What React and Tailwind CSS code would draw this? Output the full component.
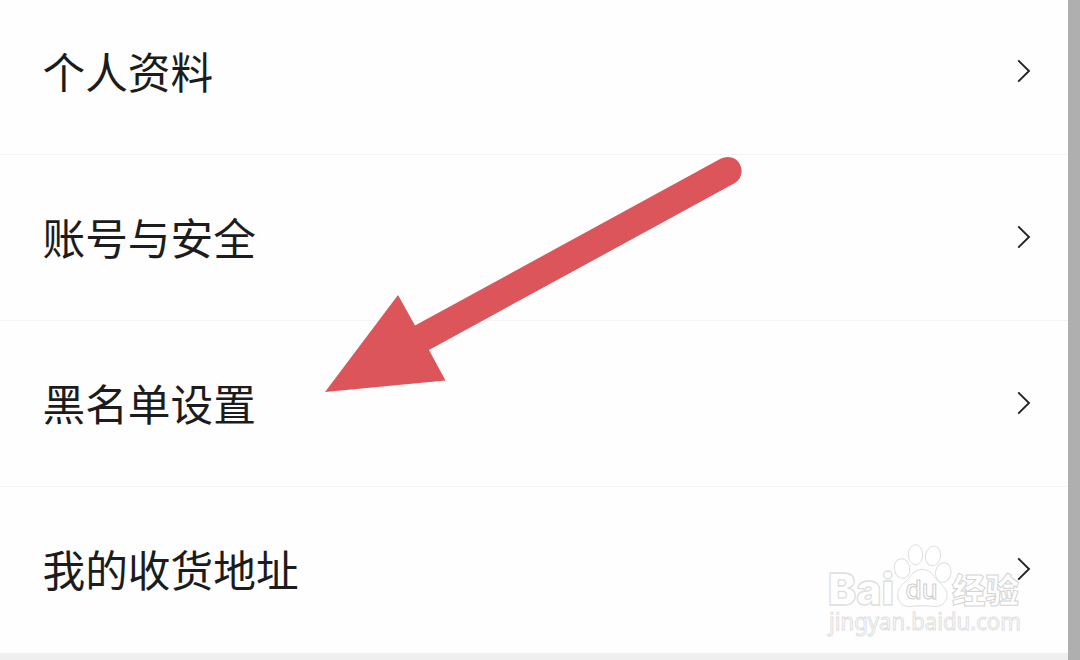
import React from "react";

const menuItems = [
  { id: "profile", label: "个人资料" },
  { id: "security", label: "账号与安全" },
  { id: "blacklist", label: "黑名单设置" },
  { id: "address", label: "我的收货地址" },
];

const Chevron = () => (
  <svg
    className="w-4 h-6 text-[#222222]"
    fill="none"
    stroke="currentColor"
    viewBox="0 0 16 24">
    <path strokeWidth={1.9} d="M2.200 1.300L13 12L2.200 22.700" />
  </svg>
);

const MenuRow = ({ label, last }) => (
  <div
    className={`flex h-[166px] items-center justify-between border-b pb-px pl-[42.5px] pr-9 ${
      last ? "border-transparent" : "border-[#f4f4f4]"
    }`}>
    <span className="pb-[2px] text-[42.7px] leading-[60px] text-[#1c1c1c]">
      {label}
    </span>
    <Chevron />
  </div>
);

const Arrow = () => (
  <svg
    className="absolute left-0 top-0 h-[660px] w-[1080px]"
    viewBox="0 0 1080 660">
    <path
      fill="#db555b"
      d="M325 392L398 295L415 325.500L721 158.500A14 14 0 0 1 734 183.500L429 350L445.500 380.500Z"
    />
  </svg>
);

const Watermark = () => (
  <svg
    className="absolute left-[810px] top-[530px] h-[120px] w-[230px]"
    viewBox="0 0 230 120"
    fill="#ffffff"
    stroke="#dedede"
    strokeWidth={1}
    strokeLinejoin="round">
    <text
      x="18"
      y="75"
      fontFamily="Inter, sans-serif"
      fontSize="44"
      fontWeight="900"
      strokeWidth={1.3}
      textLength="66"
      lengthAdjust="spacingAndGlyphs">
      Bai
    </text>
    {/* paw */}
    <ellipse cx="92" cy="38.500" rx="7.700" ry="9.800" transform="rotate(-10 92 38.500)" />
    <ellipse cx="105.500" cy="24.700" rx="7.200" ry="10" />
    <ellipse cx="123" cy="26" rx="7.500" ry="9.800" transform="rotate(10 123 26)" />
    <ellipse cx="133.300" cy="42.500" rx="7.700" ry="9.800" transform="rotate(10 133.300 42.500)" />
    <path d="M112 39.500C103 39.500 101 47 96 51C90 56 87 61 88 67C89 74 94 77 100 76.500C108 75.500 116 75.500 124 76.500C131 77 136 73 137 66C137.500 60 133 56 128 51C123 46 121 39.500 112 39.500Z" />
    <text
      x="95.500"
      y="69"
      fontFamily="Inter, sans-serif"
      fontSize="26"
      fontWeight="500"
      stroke="#cecece"
      textLength="32"
      lengthAdjust="spacingAndGlyphs">
      du
    </text>
    <text
      x="142"
      y="73"
      fontFamily="'Noto Sans CJK SC', sans-serif"
      fontSize="34"
      fontWeight="900"
      stroke="#d4d4d4"
      textLength="67"
      lengthAdjust="spacingAndGlyphs">
      经验
    </text>
    <text
      x="19"
      y="100"
      fontFamily="'Noto Sans', sans-serif"
      fontSize="23"
      fontWeight="400"
      stroke="#dedede"
      textLength="192"
      lengthAdjust="spacingAndGlyphs">
      jingyan.baidu.com
    </text>
  </svg>
);

const App = () => {
  return (
    <div className="relative flex h-[660px] w-[1080px] overflow-hidden bg-[#fefefe] font-['Noto_Sans_CJK_SC','Noto_Sans',sans-serif]">
      <div className="flex flex-1 flex-col">
        <div className="-mt-[11px] flex flex-col">
          {menuItems.map((item, index) => (
            <MenuRow
              key={item.id}
              label={item.label}
              last={index === menuItems.length - 1}
            />
          ))}
        </div>
        <div className="flex-1 bg-[#efefef]" />
      </div>
      {/* Right edge strip */}
      <div className="w-3 bg-[#afafaf]" />

      <Watermark />
      <Arrow />
    </div>
  );
};

export default App;
